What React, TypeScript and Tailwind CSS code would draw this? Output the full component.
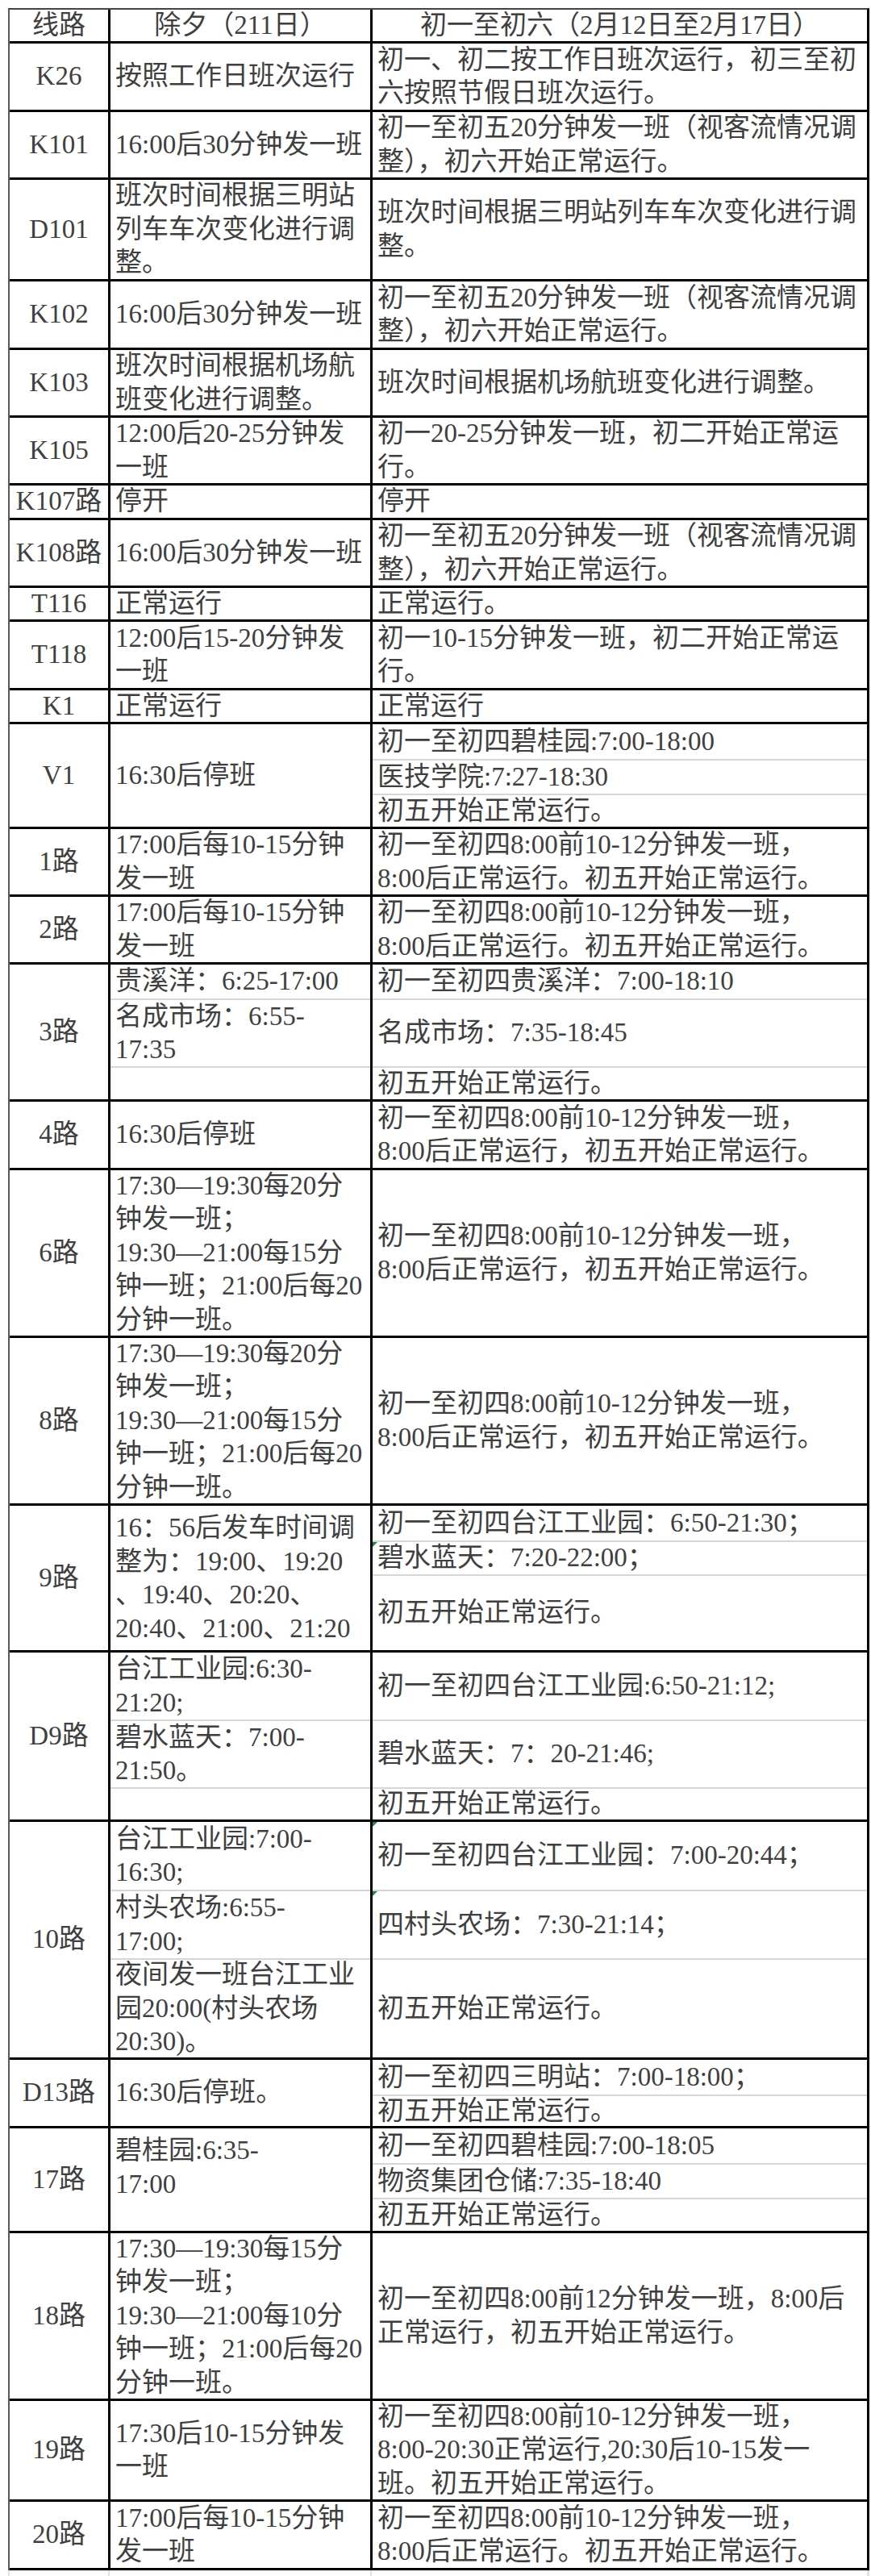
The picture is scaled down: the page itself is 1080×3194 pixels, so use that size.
type Cell = { lines: string[]; h?: string; top?: boolean; mark?: boolean };
type Row = { name: string; h: string; c2: Cell[]; c3: Cell[] };

const one = (...lines: string[]): Cell[] => [{ lines }];

const K101_C3 = ['初一至初五20分钟发一班（视客流情况调', '整），初六开始正常运行。'];
const EARLY_C3 = ['初一至初四8:00前10-12分钟发一班，', '8:00后正常运行。初五开始正常运行。'];
const EARLY_C3_B = ['初一至初四8:00前10-12分钟发一班，', '8:00后正常运行，初五开始正常运行。'];
const EVENING_C2 = ['17:30—19:30每20分', '钟发一班；', '19:30—21:00每15分', '钟一班；21:00后每20', '分钟一班。'];

const ROWS: Row[] = [
  { name: 'K26', h: 'h-[85px]', c2: one('按照工作日班次运行'), c3: one('初一、初二按工作日班次运行，初三至初', '六按照节假日班次运行。') },
  { name: 'K101', h: 'h-[84px]', c2: one('16:00后30分钟发一班'), c3: one(...K101_C3) },
  { name: 'D101', h: 'h-[126px]', c2: one('班次时间根据三明站', '列车车次变化进行调', '整。'), c3: one('班次时间根据三明站列车车次变化进行调', '整。') },
  { name: 'K102', h: 'h-[85px]', c2: one('16:00后30分钟发一班'), c3: one(...K101_C3) },
  { name: 'K103', h: 'h-[84px]', c2: one('班次时间根据机场航', '班变化进行调整。'), c3: one('班次时间根据机场航班变化进行调整。') },
  { name: 'K105', h: 'h-[84px]', c2: one('12:00后20-25分钟发', '一班'), c3: one('初一20-25分钟发一班，初二开始正常运', '行。') },
  { name: 'K107路', h: 'h-[43px]', c2: one('停开'), c3: one('停开') },
  { name: 'K108路', h: 'h-[84px]', c2: one('16:00后30分钟发一班'), c3: one(...K101_C3) },
  { name: 'T116', h: 'h-[42px]', c2: one('正常运行'), c3: one('正常运行。') },
  { name: 'T118', h: 'h-[85px]', c2: one('12:00后15-20分钟发', '一班'), c3: one('初一10-15分钟发一班，初二开始正常运', '行。') },
  { name: 'K1', h: 'h-[42px]', c2: one('正常运行'), c3: one('正常运行') },
  {
    name: 'V1',
    h: 'h-[130px]',
    c2: one('16:30后停班'),
    c3: [
      { lines: ['初一至初四碧桂园:7:00-18:00'], h: 'h-[45px]' },
      { lines: ['医技学院:7:27-18:30'], h: 'h-[43px]' },
      { lines: ['初五开始正常运行。'] },
    ],
  },
  { name: '1路', h: 'h-[84px]', c2: one('17:00后每10-15分钟', '发一班'), c3: one(...EARLY_C3) },
  { name: '2路', h: 'h-[84px]', c2: one('17:00后每10-15分钟', '发一班'), c3: one(...EARLY_C3) },
  {
    name: '3路',
    h: 'h-[170px]',
    c2: [
      { lines: ['贵溪洋：6:25-17:00'], h: 'h-[44px]' },
      { lines: ['名成市场：6:55-', '17:35'], h: 'h-[84px]' },
      { lines: [] },
    ],
    c3: [
      { lines: ['初一至初四贵溪洋：7:00-18:10'], h: 'h-[44px]' },
      { lines: ['名成市场：7:35-18:45'], h: 'h-[84px]' },
      { lines: ['初五开始正常运行。'] },
    ],
  },
  { name: '4路', h: 'h-[85px]', c2: one('16:30后停班'), c3: one(...EARLY_C3_B) },
  { name: '6路', h: 'h-[208px]', c2: one(...EVENING_C2), c3: one(...EARLY_C3_B) },
  { name: '8路', h: 'h-[208px]', c2: one(...EVENING_C2), c3: one(...EARLY_C3_B) },
  {
    name: '9路',
    h: 'h-[182px]',
    c2: [{ lines: ['16：56后发车时间调', '整为：19:00、19:20', '、19:40、20:20、', '20:40、21:00、21:20'], top: true }],
    c3: [
      { lines: ['初一至初四台江工业园：6:50-21:30；'], h: 'h-[45px]' },
      { lines: ['碧水蓝天：7:20-22:00；'], h: 'h-[42px]', mark: true },
      { lines: ['初五开始正常运行。'] },
    ],
  },
  {
    name: 'D9路',
    h: 'h-[210px]',
    c2: [
      { lines: ['台江工业园:6:30-', '21:20;'], h: 'h-[85px]' },
      { lines: ['碧水蓝天：7:00-', '21:50。'], h: 'h-[84px]' },
      { lines: [] },
    ],
    c3: [
      { lines: ['初一至初四台江工业园:6:50-21:12;'], h: 'h-[85px]' },
      { lines: ['碧水蓝天：7：20-21:46;'], h: 'h-[84px]' },
      { lines: ['初五开始正常运行。'] },
    ],
  },
  {
    name: '10路',
    h: 'h-[295px]',
    c2: [
      { lines: ['台江工业园:7:00-', '16:30;'], h: 'h-[86px]' },
      { lines: ['村头农场:6:55-', '17:00;'], h: 'h-[85px]' },
      { lines: ['夜间发一班台江工业', '园20:00(村头农场', '20:30)。'] },
    ],
    c3: [
      { lines: ['初一至初四台江工业园：7:00-20:44；'], h: 'h-[86px]', mark: true },
      { lines: ['四村头农场：7:30-21:14；'], h: 'h-[85px]', mark: true },
      { lines: ['初五开始正常运行。'] },
    ],
  },
  {
    name: 'D13路',
    h: 'h-[85px]',
    c2: one('16:30后停班。'),
    c3: [
      { lines: ['初一至初四三明站：7:00-18:00；'], h: 'h-[45px]' },
      { lines: ['初五开始正常运行。'] },
    ],
  },
  {
    name: '17路',
    h: 'h-[130px]',
    c2: [{ lines: ['碧桂园:6:35-', '17:00'], top: true }],
    c3: [
      { lines: ['初一至初四碧桂园:7:00-18:05'], h: 'h-[45px]' },
      { lines: ['物资集团仓储:7:35-18:40'], h: 'h-[43px]' },
      { lines: ['初五开始正常运行。'] },
    ],
  },
  {
    name: '18路',
    h: 'h-[208px]',
    c2: one('17:30—19:30每15分', '钟发一班；', '19:30—21:00每10分', '钟一班；21:00后每20', '分钟一班。'),
    c3: one('初一至初四8:00前12分钟发一班，8:00后', '正常运行，初五开始正常运行。'),
  },
  {
    name: '19路',
    h: 'h-[125px]',
    c2: one('17:30后10-15分钟发', '一班'),
    c3: one('初一至初四8:00前10-12分钟发一班，', '8:00-20:30正常运行,20:30后10-15发一', '班。初五开始正常运行。'),
  },
  { name: '20路', h: 'h-[85px]', c2: one('17:00后每10-15分钟', '发一班'), c3: one(...EARLY_C3) },
];

const CellBox = ({ cell, last }: { cell: Cell; last: boolean }) => (
  <div
    className={`relative flex flex-col overflow-hidden whitespace-nowrap pl-[6px] ${
      cell.top ? 'justify-start pt-[7px]' : 'justify-center'
    } ${cell.h && !last ? `${cell.h} shrink-0 border-b-2 border-[#d6d6d6]` : 'min-h-0 flex-1'}`}
  >
    {cell.mark && (
      <span className="absolute left-0 top-0 h-0 w-0 border-r-[6px] border-t-[6px] border-r-transparent border-t-[#1a8f3a]" />
    )}
    {cell.lines.map((line, i) => (
      <span key={i}>{line}</span>
    ))}
  </div>
);

const Column = ({ cells, className }: { cells: Cell[]; className: string }) => (
  <div className={`flex flex-col border-l-[3px] border-black ${className}`}>
    {cells.map((cell, i) => (
      <CellBox key={i} cell={cell} last={i === cells.length - 1} />
    ))}
  </div>
);

const App = () => {
  return (
    <div className="h-[3194px] w-[1080px] overflow-hidden bg-white pl-[10px] pt-[10px] font-['Liberation_Serif','Noto_Sans_CJK_SC',serif] text-[33px] leading-[41.5px] text-[#3f3f3f]">
      <div className="w-[1068px] border-l-2 border-r-[3px] border-t-2 border-l-[#5a5a5a] border-r-black border-t-[#444]">
        <div className="flex h-[42px] border-b-[3px] border-black">
          <div className="flex w-[122px] shrink-0 items-center justify-center">线路</div>
          <div className="flex w-[325px] shrink-0 items-center justify-center border-l-[3px] border-black">
            除夕（211日）
          </div>
          <div className="flex flex-1 items-center justify-center border-l-[3px] border-black">
            初一至初六（2月12日至2月17日）
          </div>
        </div>

        {ROWS.map(row => (
          <div key={row.name} className={`flex border-b-[3px] border-black ${row.h}`}>
            <div className="flex w-[122px] shrink-0 items-center justify-center whitespace-nowrap">
              {row.name}
            </div>
            <Column cells={row.c2} className="w-[325px] shrink-0" />
            <Column cells={row.c3} className="min-w-0 flex-1" />
          </div>
        ))}
      </div>

      {/* next row peeks in below the crop */}
      <div className="flex h-[20px] w-[1068px] border-l-2 border-r-[3px] border-[#e2e2e2]">
        <div className="w-[122px] shrink-0" />
        <div className="w-[325px] shrink-0 border-l-2 border-[#e2e2e2]" />
        <div className="flex-1 border-l-2 border-[#e2e2e2]" />
      </div>
    </div>
  );
};

export default App;
